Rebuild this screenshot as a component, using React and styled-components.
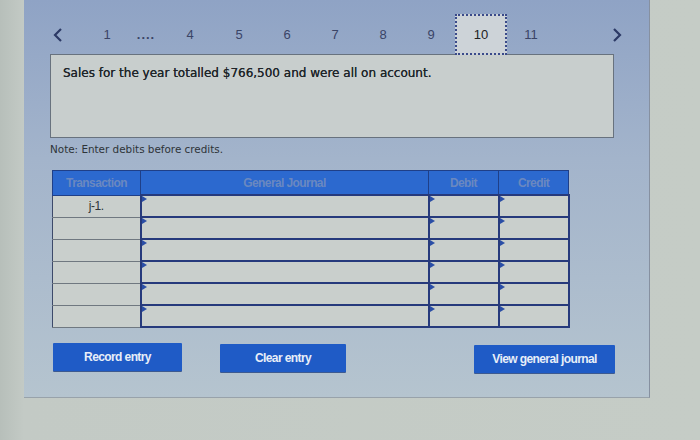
import React from 'react'
import styled, { createGlobalStyle } from 'styled-components'

const GlobalStyle = createGlobalStyle`
  html, body {
    margin: 0;
    padding: 0;
    background: #c5ccc6;
    font-family: "DejaVu Sans", Verdana, sans-serif;
  }
`

const Page = styled.div`
  width: 700px;
  height: 440px;
  overflow: hidden;
  background: linear-gradient(90deg, #b7bfba 0px, #c3cac5 24px, #c5ccc6 100%);
`

const Panel = styled.div`
  margin-left: 24px;
  width: 626px;
  height: 398px;
  box-sizing: border-box;
  border-right: 1px solid #8690a0;
  border-bottom: 1px solid #98a2aa;
  background: linear-gradient(180deg, #8fa3c5 0%, #a3b4cb 40%, #b5c4cf 100%);
  padding-top: 14px;
`

const Pager = styled.div`
  display: flex;
  align-items: center;
  height: 41px;
  padding-left: 26px;
  font-family: "Liberation Sans", Arial, sans-serif;
  font-size: 13px;
  color: #3a4466;
  position: relative;
  z-index: 1;
`

const Arrow = styled.div`
  width: 16px;
  display: flex;
  justify-content: center;
  margin-right: ${(p) => p.$gap || 0}px;
  margin-left: ${(p) => p.$left || 0}px;
`

const PageItem = styled.div`
  width: ${(p) => p.$w || 48}px;
  height: 100%;
  box-sizing: border-box;
  display: flex;
  align-items: center;
  justify-content: center;
  letter-spacing: ${(p) => (p.$dots ? '1px' : '0')};
  font-weight: ${(p) => (p.$dots ? 'bold' : 'normal')};
  ${(p) =>
    p.$active &&
    `
    background: #cdd3d8;
    border: 2px dotted #3a4a8a;
    color: #222;
  `}
`

const Question = styled.div`
  margin-left: 26px;
  width: 564px;
  height: 84px;
  box-sizing: border-box;
  margin-top: -1px;
  background: #c8cecd;
  border: 1px solid #68727e;
  padding: 11px 12px;
  font-size: 12px;
  color: #20262a;
  text-shadow: 0 0 0.4px #20262a;
`

const Note = styled.div`
  margin: 5px 0 0 26px;
  font-size: 10.4px;
  color: #2e3438;
  height: 12px;
`

const Journal = styled.table`
  margin: 15px 0 0 28px;
  width: 512px;
  border-collapse: collapse;
  table-layout: fixed;
  font-family: "Liberation Sans", Arial, sans-serif;
`

const Head = styled.th`
  height: 23px;
  padding: 0;
  background: #2c69cf;
  border: 1px solid #1f3f88;
  color: #6a88c0;
  font-size: 12px;
  font-weight: bold;
  text-align: center;
  letter-spacing: -0.6px;
  width: ${(p) => p.$w}px;
`

const TransCell = styled.td`
  height: 20px;
  padding: 0;
  background: #c9cfcc;
  border: 1px solid #6f7880;
  border-left: 1px solid #3d4a6a;
  text-align: center;
  font-size: 12px;
  letter-spacing: -0.4px;
  color: #2d3338;
`

const InputCell = styled.td`
  position: relative;
  height: 20px;
  padding: 0;
  background: #c9cfcc;
  border: 2px solid #263a7c;
  border-right-width: ${(p) => (p.$last ? 2 : 1)}px;
`

const Flag = styled.span`
  position: absolute;
  left: 0;
  top: 0;
  width: 0;
  height: 0;
  border-top: 3px solid transparent;
  border-bottom: 3px solid transparent;
  border-left: 5px solid #2a4ea6;
`

const Actions = styled.div`
  display: flex;
  align-items: center;
  margin: 12px 0 0 29px;
  width: 563px;
`

const Button = styled.button`
  height: 28px;
  width: ${(p) => p.$w}px;
  margin-left: ${(p) => p.$ml || 0}px;
  margin-top: ${(p) => p.$mt || 0}px;
  border: none;
  border-radius: 1px;
  background: #1f5bc6;
  color: #e8eef8;
  font-family: "Liberation Sans", Arial, sans-serif;
  font-size: 12px;
  font-weight: bold;
  letter-spacing: -0.6px;
  padding: 0;
  box-shadow: 0 1px 0 #3d5a90;
`

const Chevron = ({ dir }) => (
  <svg width="10" height="16" viewBox="0 0 10 16">
    <path
      d={dir === 'left' ? 'M8 2 L2 8 L8 14' : 'M2 2 L8 8 L2 14'}
      fill="none"
      stroke="#2c3a66"
      strokeWidth="2.2"
    />
  </svg>
)

const rows = ['j-1.', '', '', '', '', '']

export default function App() {
  return (
    <Page>
      <GlobalStyle />
      <Panel>
        <Pager>
          <Arrow $gap={21}>
            <Chevron dir="left" />
          </Arrow>
          <PageItem $w={40}>1</PageItem>
          <PageItem $w={38} $dots>....</PageItem>
          <PageItem $w={50}>4</PageItem>
          <PageItem>5</PageItem>
          <PageItem>6</PageItem>
          <PageItem>7</PageItem>
          <PageItem>8</PageItem>
          <PageItem>9</PageItem>
          <PageItem $w={52} $active>10</PageItem>
          <PageItem>11</PageItem>
          <Arrow $left={54}>
            <Chevron dir="right" />
          </Arrow>
        </Pager>

        <Question>Sales for the year totalled $766,500 and were all on account.</Question>
        <Note>Note: Enter debits before credits.</Note>

        <Journal>
          <thead>
            <tr>
              <Head $w={87}>Transaction</Head>
              <Head $w={287}>General Journal</Head>
              <Head $w={69}>Debit</Head>
              <Head $w={69}>Credit</Head>
            </tr>
          </thead>
          <tbody>
            {rows.map((label, i) => (
              <tr key={i}>
                <TransCell>{label}</TransCell>
                <InputCell><Flag /></InputCell>
                <InputCell><Flag /></InputCell>
                <InputCell $last><Flag /></InputCell>
              </tr>
            ))}
          </tbody>
        </Journal>

        <Actions>
          <Button $w={129}>Record entry</Button>
          <Button $w={126} $ml={38} $mt={3}>Clear entry</Button>
          <Button $w={141} $ml={128} $mt={5}>View general journal</Button>
        </Actions>
      </Panel>
    </Page>
  )
}
